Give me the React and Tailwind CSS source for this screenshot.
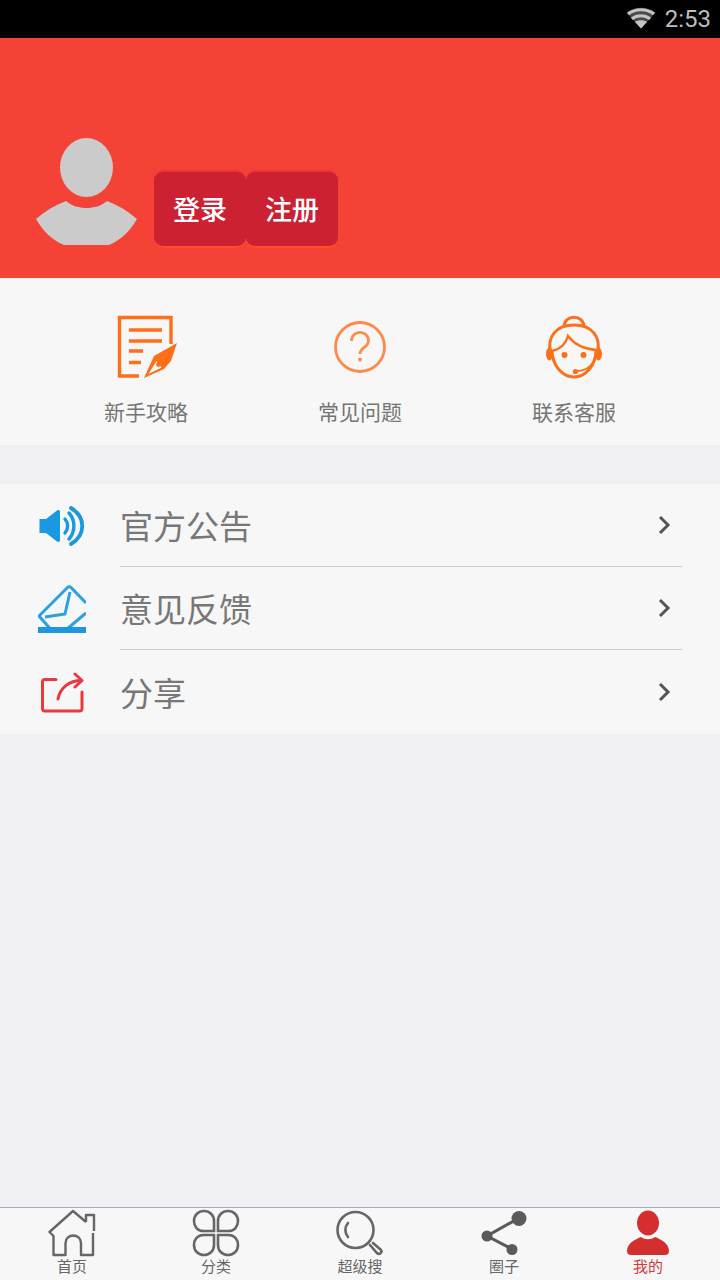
import React from 'react'

const CJK = `font-['Noto_Sans_CJK_SC','Noto_Sans',sans-serif]`

function Wifi() {
  return (
    <svg width="30" height="22" viewBox="0 0 30 22" className="mr-[9px] -translate-y-[1px]">
      <path d="M15 21.5 L0.5 5.5 C8.5 -1 21.5 -1 29.5 5.5 Z" fill="#4a4a4a" />
      <path d="M15 21.5 L8.8 14.8 C12.2 12.6 17.8 12.6 21.200 14.800 Z" fill="#c4c4c4" />
      <path d="M5.800 11.800 C11.200 7.600 18.800 7.600 24.200 11.800" fill="none" stroke="#c4c4c4" strokeWidth="3" />
      <path d="M2 7 C9.500 1.400 20.500 1.400 28 7" fill="none" stroke="#c4c4c4" strokeWidth="3" />
    </svg>
  )
}

function Avatar() {
  return (
    <svg width="101" height="108" viewBox="0 0 101 108" className="shrink-0">
      <ellipse cx="50.500" cy="29.500" rx="26.500" ry="29.500" fill="#cbcbcb" />
      <path d="M0 81 C9 73 19 67 30 63 C36 68 43 70 50.500 70 C58 70 65 68 71 63 C82 67 92 73 101 81 C94 93 85 102 73 107 L28 107 C16 102 7 93 0 81 Z" fill="#cbcbcb" />
    </svg>
  )
}

function DocIcon() {
  return (
    <svg width="60" height="64" viewBox="115 315 60 64" className="overflow-visible">
      <g fill="none" stroke="#ff6f1a" strokeWidth="3.400">
        <path d="M170 344 V317.500 H118.500 V376 H138" />
        <path d="M128 330 H161 M128 341 H161" />
        <path d="M128 351 H142 M128 362.500 H140" />
      </g>
      <path d="M176 343 L170 361 L163 369 L143 378 L153 356 Z" fill="#ff6f1a" />
      <path d="M147.500 374 L155.500 361 L160.500 367.500 Z" fill="#f7f7f7" />
      <circle cx="157.500" cy="364.500" r="2.400" fill="#ff6f1a" />
    </svg>
  )
}

function HelpIcon() {
  return (
    <svg width="60" height="64" viewBox="330 315 60 64">
      <circle cx="360" cy="347" r="24.500" fill="none" stroke="#ff8a4a" strokeWidth="2.800" />
      <path d="M351.500 341 C351.500 329.500 368.500 329.500 368.500 341 C368.500 347 360 347.500 360 354" fill="none" stroke="#ff8a4a" strokeWidth="2.800" />
      <circle cx="360" cy="359.500" r="1.900" fill="#ff8a4a" />
    </svg>
  )
}

function ServiceIcon() {
  return (
    <svg width="60" height="64" viewBox="544 315 60 64">
      <g fill="none" stroke="#ff6f1a" strokeWidth="3">
        <path d="M564 327 C564 314 584 314 584 327" />
        <path d="M550.500 352 C547 337 556 325 574 325 C592 325 601 337 597.500 352" />
        <path d="M552 350 C552 366 563 377 574 377 C585 377 596 366 596 350" />
        <path d="M552 351 C561 349 566 343 568 336 C574 344 584 349 596 350" strokeWidth="2.400" />
        <path d="M594 361 C590 368 584 371 577 371" strokeWidth="2" />
      </g>
      <ellipse cx="549.500" cy="354" rx="3.500" ry="6.500" fill="#ff6f1a" />
      <ellipse cx="598.500" cy="354" rx="3.500" ry="6.500" fill="#ff6f1a" />
      <circle cx="564.500" cy="355" r="3" fill="#ff6f1a" />
      <circle cx="583.500" cy="355" r="3" fill="#ff6f1a" />
      <circle cx="575.500" cy="371.500" r="2.600" fill="#ff6f1a" />
    </svg>
  )
}

function SpeakerIcon() {
  return (
    <svg width="48" height="40" viewBox="38 506 48 40">
      <path d="M39.500 519 H46 L57 510.500 C58.500 509.500 60 510 60 512 V540 C60 542 58.500 542.500 57 541.500 L46 533 H39.500 Z" fill="#1b98e0" />
      <g fill="none" stroke="#1b98e0" strokeLinecap="round" strokeWidth="3.400">
        <path d="M65 519 C68.500 523 68.500 529 65 533" />
        <path d="M69 513 C75.500 520 75.500 532 69 539" />
        <path d="M71 508 C86 517 86 535 71 544" strokeWidth="3.800" />
      </g>
    </svg>
  )
}

function MailIcon() {
  return (
    <svg width="48" height="48" viewBox="38 585 48 48">
      <g fill="none" stroke="#2aa2e2" strokeWidth="3" strokeLinejoin="round">
        <path d="M86 603 L71 587.500 C70 586.500 68.500 586.500 67.500 587.500 L39 616 L50.500 629" />
        <path d="M86 613 L67 629" />
        <path d="M70 592 L65 614 L45 617" />
      </g>
      <rect x="38" y="627" width="48" height="6" fill="#1b98e0" />
    </svg>
  )
}

function ShareIcon() {
  return (
    <svg width="46" height="44" viewBox="38 670 46 44">
      <g fill="none" stroke="#e83a3f" strokeWidth="3" strokeLinecap="round" strokeLinejoin="round">
        <path d="M56 679.500 H45 C43 679.500 42.500 680 42.500 682 V708.500 C42.500 710.500 43 711 45 711 H79.500 C81.500 711 82 710.500 82 708.500 V692" />
        <path d="M58 699 C60 688 69 680.500 81.500 680.500" />
        <path d="M75 674 L82 680.500 L75 687" />
      </g>
    </svg>
  )
}

function Chevron() {
  return (
    <svg width="14" height="20" viewBox="0 0 14 20">
      <path d="M3 2 L11 10 L3 18" fill="none" stroke="#555555" strokeWidth="3" />
    </svg>
  )
}

function HomeIcon() {
  return (
    <svg width="48" height="48" viewBox="48 1209 48 48">
      <path d="M86 1222 V1215 H94 V1231 M86 1222 L73 1211 L49.500 1232 L53.500 1236 V1255 H65.500 V1243 C65.500 1233 81 1233 81 1243 V1255 H93 V1233" fill="none" stroke="#666666" strokeWidth="2.400" strokeLinejoin="round" />
    </svg>
  )
}

function CloverIcon() {
  return (
    <svg width="48" height="48" viewBox="192 1209 48 48">
      <g fill="none" stroke="#666666" strokeWidth="2.600">
        <path d="M214 1231 H203.500 C197.500 1231 194 1226.500 194 1221 C194 1215 198.500 1211 204 1211 C209.500 1211 214 1215 214 1221 Z" />
        <path d="M218 1231 H228.500 C234.500 1231 238 1226.500 238 1221 C238 1215 233.500 1211 228 1211 C222.500 1211 218 1215 218 1221 Z" />
        <path d="M214 1235 H203.500 C197.500 1235 194 1239.500 194 1245 C194 1251 198.500 1255 204 1255 C209.500 1255 214 1251 214 1245 Z" />
        <path d="M218 1235 H228.500 C234.500 1235 238 1239.500 238 1245 C238 1251 233.500 1255 228 1255 C222.500 1255 218 1251 218 1245 Z" />
      </g>
    </svg>
  )
}

function SearchIcon() {
  return (
    <svg width="48" height="48" viewBox="336 1209 48 48">
      <g fill="none" stroke="#666666" strokeWidth="2.600" strokeLinecap="round">
        <circle cx="355.500" cy="1230" r="18" />
        <path d="M348 1223 C344.500 1227 344.500 1233 348 1237" />
        <path d="M370 1245 L377 1253 C379.500 1255.500 383 1252 380.500 1249.500 L373 1243" />
      </g>
    </svg>
  )
}

function CircleShareIcon() {
  return (
    <svg width="48" height="48" viewBox="480 1209 48 48">
      <path d="M519 1218 L487 1236 L512 1249" fill="none" stroke="#5a5a5a" strokeWidth="3" />
      <circle cx="519" cy="1218.500" r="7.500" fill="#5a5a5a" />
      <circle cx="487" cy="1236" r="5.500" fill="#5a5a5a" />
      <circle cx="512" cy="1249.500" r="5.500" fill="#5a5a5a" />
    </svg>
  )
}

function MeIcon() {
  return (
    <svg width="48" height="48" viewBox="624 1209 48 48">
      <ellipse cx="648" cy="1223" rx="11" ry="12.500" fill="#d32f2f" />
      <path d="M627 1251 C627 1243 636 1239 641 1237 C645 1240 651 1240 655 1237 C660 1239 669 1243 669 1251 C669 1254 667 1255 665 1255 H631 C629 1255 627 1254 627 1251 Z" fill="#d32f2f" />
    </svg>
  )
}

const QUICK = [
  { label: '新手攻略', Icon: DocIcon },
  { label: '常见问题', Icon: HelpIcon },
  { label: '联系客服', Icon: ServiceIcon },
]

const ROWS = [
  { label: '官方公告', Icon: SpeakerIcon, line: true },
  { label: '意见反馈', Icon: MailIcon, line: true },
  { label: '分享', Icon: ShareIcon, line: false },
]

const TABS = [
  { label: '首页', Icon: HomeIcon },
  { label: '分类', Icon: CloverIcon },
  { label: '超级搜', Icon: SearchIcon },
  { label: '圈子', Icon: CircleShareIcon },
  { label: '我的', Icon: MeIcon, active: true },
]

export default function App() {
  return (
    <div className={`flex h-[1280px] w-[720px] flex-col overflow-hidden bg-[#efeff4] ${CJK}`}>
      {/* status bar */}
      <div className="flex h-[38px] shrink-0 items-center justify-end bg-black">
        <Wifi />
        <span className="mr-[9px] font-['Roboto',sans-serif] text-[24px] leading-none text-[#bdbdbd]">2:53</span>
      </div>

      {/* header */}
      <div className="flex h-[240px] shrink-0 items-start bg-[#f44336] pl-9 pt-[100px]">
        <Avatar />
        <div className="ml-[17px] mt-8 flex">
          {['登录', '注册'].map(t => (
            <div
              key={t}
              className="flex h-[78px] w-[92px] items-center justify-center rounded-[10px] border-t-2 border-b-2 border-t-[#e6363a] border-b-[#ff4d1f] bg-[#cb2133] text-[27px] font-medium text-white"
            >
              {t}
            </div>
          ))}
        </div>
      </div>

      {/* quick links */}
      <div className="grid h-[167px] shrink-0 grid-cols-3 bg-[#f7f7f7] px-[39px] pt-[37px]">
        {QUICK.map(({ label, Icon }) => (
          <div key={label} className="flex flex-col items-center">
            <Icon />
            <span className="mt-[17px] text-[21px] leading-[30px] text-[#757575]">{label}</span>
          </div>
        ))}
      </div>

      {/* list */}
      <div className="mt-[39px] shrink-0 bg-[#f7f7f7]">
        {ROWS.map(({ label, Icon, line }) => (
          <div key={label} className="flex h-[83px] items-center pl-[38px] last:h-[84px]">
            <div className="w-[82px] shrink-0">
              <Icon />
            </div>
            <div className={`mr-[38px] flex h-full flex-1 items-center justify-between pr-[11px] ${line ? 'border-b border-[#cccccc]' : ''}`}>
              <span className="text-[33px] leading-none text-[#777777]">{label}</span>
              <Chevron />
            </div>
          </div>
        ))}
      </div>

      {/* bottom nav */}
      <div className="mt-auto grid h-[73px] shrink-0 grid-cols-5 border-t border-[#aaaaaa] bg-[#f7f7f7]">
        {TABS.map(({ label, Icon, active }) => (
          <div key={label} className="flex flex-col items-center pt-[1px]">
            <Icon />
            <span className={`-mt-[1px] text-[15px] leading-[20px] ${active ? 'text-[#d9363a]' : 'text-[#666666]'}`}>{label}</span>
          </div>
        ))}
      </div>
    </div>
  )
}
